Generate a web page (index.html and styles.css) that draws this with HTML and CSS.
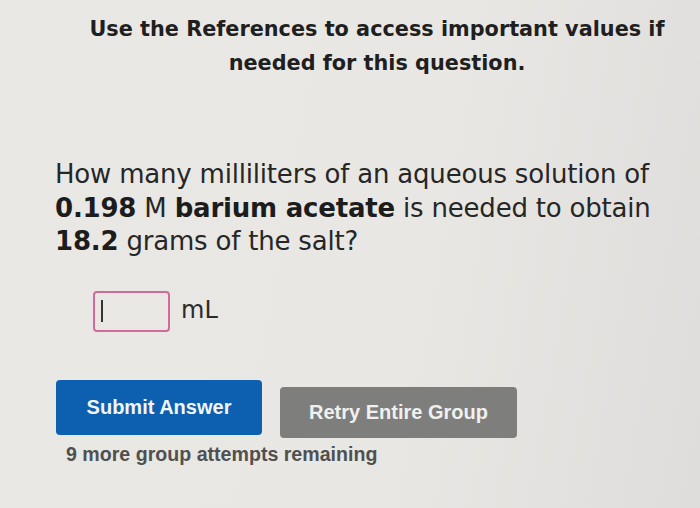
FILE: index.html
```html
<!DOCTYPE html>
<html>
<head>
<meta charset="utf-8">
<link rel="stylesheet" href="styles.css">
</head>
<body>
<div class="page">
  <div class="notice">
    <p>Use the References to access important values if</p>
    <p>needed for this question.</p>
  </div>
  <div class="question">
    How many milliliters of an aqueous solution of<br>
    <b>0.198</b> M <b>barium acetate</b> is needed to obtain<br>
    <b>18.2</b> grams of the salt?
  </div>
  <div class="answer">
    <div class="input"><span class="caret"></span></div>
    <span class="unit">mL</span>
  </div>
  <div class="buttons">
    <div class="btn submit">Submit Answer</div>
    <div class="btn retry">Retry Entire Group</div>
  </div>
  <div class="remaining">9 more group attempts remaining</div>
</div>
</body>
</html>
```

FILE: styles.css
```css
html, body {
  margin: 0;
  padding: 0;
}
body {
  width: 700px;
  height: 508px;
  overflow: hidden;
  background: linear-gradient(100deg, #e9e8e5 0%, #e8e7e4 60%, #dedddb 100%);
  color: #2a2a2a;
}
.page {
  display: flex;
  flex-direction: column;
}
.notice {
  font-family: "DejaVu Sans", Verdana, sans-serif;
  font-weight: bold;
  font-size: 20.8px;
  color: #1f1f1f;
  text-align: center;
  padding-top: 12px;
  padding-left: 54px;
}
.notice p {
  margin: 0;
  line-height: 34px;
}
.question {
  font-family: "DejaVu Sans", Verdana, sans-serif;
  font-size: 26px;
  line-height: 33.5px;
  color: #262626;
  margin-top: 78px;
  padding-left: 55px;
  letter-spacing: -0.2px;
}
.question b {
  color: #1c1c1c;
}
.answer {
  display: flex;
  align-items: center;
  margin-top: 32px;
  padding-left: 93px;
  gap: 11px;
}
.input {
  width: 67px;
  height: 37px;
  border: 2px solid #d46a9a;
  border-radius: 4px;
  display: flex;
  align-items: center;
  padding-left: 6px;
  box-sizing: content-box;
}
.caret {
  width: 1.5px;
  height: 22px;
  background: #333;
}
.unit {
  font-family: "DejaVu Sans", Verdana, sans-serif;
  font-size: 24px;
  color: #2b2b2b;
  margin-top: -2px;
}
.buttons {
  display: flex;
  align-items: flex-start;
  gap: 18px;
  margin-top: 48px;
  padding-left: 56px;
}
.btn {
  font-family: "Liberation Sans", Arial, sans-serif;
  font-weight: bold;
  font-size: 20px;
  display: flex;
  align-items: center;
  justify-content: center;
  border-radius: 4px;
}
.submit {
  width: 206px;
  height: 55px;
  background: #0d5fb0;
  color: #f2f5fa;
}
.retry {
  width: 237px;
  height: 51px;
  margin-top: 7px;
  background: #7e7e7c;
  color: #f0f0ee;
}
.remaining {
  font-family: "Liberation Sans", Arial, sans-serif;
  font-weight: bold;
  font-size: 19.6px;
  color: #505050;
  padding-left: 66px;
  margin-top: 5px;
}
```
